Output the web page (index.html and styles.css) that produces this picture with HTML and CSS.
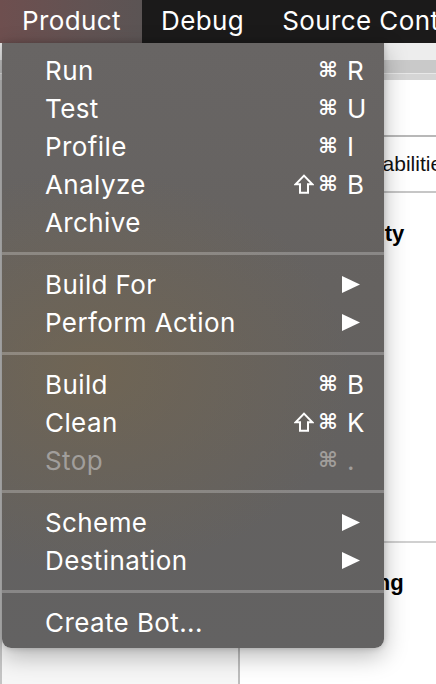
FILE: index.html
```html
<!DOCTYPE html>
<html lang="en">
<head>
<meta charset="utf-8">
<title>Product menu</title>
<link rel="stylesheet" href="styles.css">
</head>
<body>
<div class="screen">
  <div class="menubar">
    <div class="mb-item active">Product</div>
    <div class="mb-item">Debug</div>
    <div class="mb-item">Source Control</div>
  </div>
  <div class="window">
    <div class="toolbar"></div>
    <div class="tabbar"></div>
    <div class="subbar"></div>
    <div class="main">
      <div class="sidebar"></div>
      <div class="pane">
        <div class="pane-top"></div>
        <div class="tabs"><span class="tab">Capabilities</span></div>
        <div class="section identity">Identity</div>
        <div class="section signing">Signing</div>
      </div>
    </div>
  </div>

  <div class="menu">
    <div class="item"><span class="label">Run</span><span class="keys"><span class="k-shift"></span><span class="k-cmd">⌘</span><span class="k-key">R</span></span></div>
    <div class="item"><span class="label">Test</span><span class="keys"><span class="k-shift"></span><span class="k-cmd">⌘</span><span class="k-key">U</span></span></div>
    <div class="item"><span class="label">Profile</span><span class="keys"><span class="k-shift"></span><span class="k-cmd">⌘</span><span class="k-key">I</span></span></div>
    <div class="item"><span class="label">Analyze</span><span class="keys"><span class="k-shift"><svg width="20" height="20" viewBox="0 0 20 20" aria-label="Shift"><path d="M10 1.6 L18.4 10.2 H14 V18.8 H6 V10.2 H1.6 Z" fill="none" stroke="#fff" stroke-width="2" stroke-linejoin="miter"/></svg></span><span class="k-cmd">⌘</span><span class="k-key">B</span></span></div>
    <div class="item"><span class="label">Archive</span></div>
    <div class="sep"></div>
    <div class="item"><span class="label">Build For</span><svg class="arrow" width="18" height="17" viewBox="0 0 18 17"><polygon points="0,0 18,8.5 0,17" fill="#fff"/></svg></div>
    <div class="item"><span class="label">Perform Action</span><svg class="arrow" width="18" height="17" viewBox="0 0 18 17"><polygon points="0,0 18,8.5 0,17" fill="#fff"/></svg></div>
    <div class="sep"></div>
    <div class="item"><span class="label">Build</span><span class="keys"><span class="k-shift"></span><span class="k-cmd">⌘</span><span class="k-key">B</span></span></div>
    <div class="item"><span class="label">Clean</span><span class="keys"><span class="k-shift"><svg width="20" height="20" viewBox="0 0 20 20" aria-label="Shift"><path d="M10 1.6 L18.4 10.2 H14 V18.8 H6 V10.2 H1.6 Z" fill="none" stroke="#fff" stroke-width="2" stroke-linejoin="miter"/></svg></span><span class="k-cmd">⌘</span><span class="k-key">K</span></span></div>
    <div class="item disabled"><span class="label">Stop</span><span class="keys"><span class="k-shift"></span><span class="k-cmd">⌘</span><span class="k-key">.</span></span></div>
    <div class="sep"></div>
    <div class="item"><span class="label">Scheme</span><svg class="arrow" width="18" height="17" viewBox="0 0 18 17"><polygon points="0,0 18,8.5 0,17" fill="#fff"/></svg></div>
    <div class="item"><span class="label">Destination</span><svg class="arrow" width="18" height="17" viewBox="0 0 18 17"><polygon points="0,0 18,8.5 0,17" fill="#fff"/></svg></div>
    <div class="sep"></div>
    <div class="item"><span class="label">Create Bot...</span></div>
  </div>
</div>
</body>
</html>
```

FILE: styles.css
```css
* { box-sizing: border-box; }
html, body { margin: 0; padding: 0; }
body {
  width: 436px;
  height: 684px;
  overflow: hidden;
  background: #fff;
  font-family: Inter, "Liberation Sans", sans-serif;
}
.screen {
  position: relative;
  width: 436px;
  height: 684px;
  overflow: hidden;
}
.menubar {
  height: 43px;
  background: #1b1a1a;
  display: flex;
  white-space: nowrap;
  overflow: hidden;
}
.mb-item {
  color: #fff;
  font-size: 26px;
  letter-spacing: 0.4px;
  line-height: 42px;
  padding: 0 19px;
  flex-shrink: 0;
}
.mb-item.active {
  padding: 0 0 0 22px;
  width: 142px;
  background: linear-gradient(90deg, #6e4f4f 0%, #625353 60%, #5b5454 100%);
}
.window { display: flex; flex-direction: column; }
.toolbar { height: 17px; background: #ededed; }
.tabbar { height: 14px; background: #c9c9c9; border-bottom: 1px solid #e8e8e8; }
.subbar { height: 6px; background: #d5d5d5; }
.main { display: flex; height: 700px; }
.sidebar {
  width: 240px;
  flex-shrink: 0;
  background: #f6f6f6;
  border-left: 2px solid #c4c4c4;
  border-right: 2px solid #bdbdbd;
}
.pane {
  flex: 1;
  min-width: 0;
  overflow: hidden;
  background: #fff;
  font-family: "Liberation Sans", Arial, sans-serif;
}
.pane-top { height: 57px; border-bottom: 2px solid #b8b8b8; }
.tabs {
  height: 56px;
  border-bottom: 2px solid #c6c6c6;
  padding-left: 104px;
  font-size: 21px;
  line-height: 54px;
  color: #111;
  white-space: nowrap;
}
.section {
  font-weight: bold;
  font-size: 22px;
  line-height: 26px;
  color: #000;
  white-space: nowrap;
}
.identity { padding: 28px 0 0 86px; height: 350px; border-bottom: 2px solid #d0d0d0; }
.signing { padding: 27px 0 0 83px; }

.menu {
  position: absolute;
  top: 43px;
  left: 2px;
  width: 382px;
  height: 605px;
  padding: 8px 20px 7px 43px;
  border-radius: 0 0 9px 9px;
  background:
    radial-gradient(ellipse 260px 200px at 90px 330px, rgba(125,105,70,0.45), rgba(125,105,70,0) 100%),
    linear-gradient(180deg, #686564 0%, #656260 40%, #636160 70%, #636262 100%);
  box-shadow: 0 8px 24px rgba(0,0,0,0.28), 0 0 6px rgba(0,0,0,0.2);
  color: #fff;
  font-size: 26px;
  letter-spacing: 0.4px;
}
.item {
  height: 38px;
  display: flex;
  align-items: center;
  white-space: nowrap;
}
.label { flex: 1; }
.keys { display: flex; align-items: center; letter-spacing: 0; }
.k-shift, .k-cmd { font-family: "DejaVu Sans", sans-serif; text-align: center; }
.k-shift { width: 26px; display: flex; justify-content: center; align-items: center; }
.k-shift svg { display: block; margin-top: -1px; }
.k-cmd { width: 22px; font-size: 21px; font-weight: bold; }
.k-key { width: 17px; margin-left: 8px; font-size: 26px; }
.disabled { color: #a19e9b; }
.arrow { margin-right: 4px; flex-shrink: 0; }
.sep {
  height: 24px;
  margin: 0 -20px 0 -43px;
  display: flex;
  align-items: center;
}
.sep::before {
  content: "";
  display: block;
  width: 100%;
  height: 3px;
  background: rgba(255,255,255,0.24);
}
```
